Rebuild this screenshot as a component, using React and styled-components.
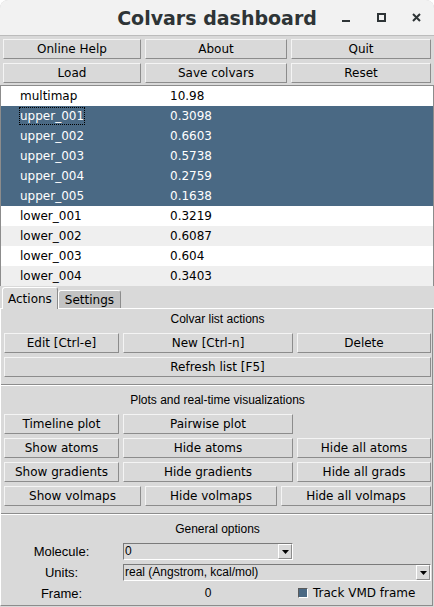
import React from "react";
import styled, { createGlobalStyle } from "styled-components";

const GlobalStyle = createGlobalStyle`
  html, body { margin: 0; padding: 0; background: #ffffff; }
  * { box-sizing: border-box; }
`;

const TK_BG = "#d9d9d9";
const DARK_EDGE = "#8c8c8c";
const SELECT_BG = "#4a6984";

const colvars = [
  { id: "c0", name: "multimap", value: "10.98" },
  { id: "c1", name: "upper_001", value: "0.3098", selected: true, focus: true },
  { id: "c2", name: "upper_002", value: "0.6603", selected: true },
  { id: "c3", name: "upper_003", value: "0.5738", selected: true },
  { id: "c4", name: "upper_004", value: "0.2759", selected: true },
  { id: "c5", name: "upper_005", value: "0.1638", selected: true },
  { id: "c6", name: "lower_001", value: "0.3219" },
  { id: "c7", name: "lower_002", value: "0.6087" },
  { id: "c8", name: "lower_003", value: "0.604" },
  { id: "c9", name: "lower_004", value: "0.3403" },
];

const Window = styled.div`
  width: 434px;
  height: 607px;
  background: ${TK_BG};
  border-radius: 8px 8px 0 0;
  overflow: hidden;
  display: flex;
  flex-direction: column;
`;

const TitleBar = styled.div`
  height: 36px;
  flex: none;
  background: #f2f2f2;
  border-bottom: 1px solid #bcbcbc;
  border-radius: 8px 8px 0 0;
  display: grid;
  grid-template-columns: 1fr auto 1fr;
  align-items: center;
`;

const Title = styled.div`
  grid-column: 2;
  font-family: "DejaVu Sans", sans-serif;
  font-weight: bold;
  font-size: 19px;
  color: #2e3436;
  padding-top: 1px;
`;

const Controls = styled.div`
  grid-column: 3;
  justify-self: end;
  display: flex;
  gap: 3px;
  padding-right: 2px;
`;

const ControlSlot = styled.div`
  width: 32px;
  height: 34px;
  display: flex;
  align-items: center;
  justify-content: center;
  color: #2e3436;
`;

const TopButtons = styled.div`
  display: grid;
  grid-template-columns: 138px 142px 140px;
  grid-auto-rows: 20px;
  gap: 4px;
  padding: 3px 3px 0 3px;
`;

const Button = styled.div`
  height: 20px;
  background: ${TK_BG};
  border-top: 1px solid #f4f4f4;
  border-left: 1px solid #f4f4f4;
  border-right: 1px solid ${DARK_EDGE};
  border-bottom: 1px solid ${DARK_EDGE};
  display: flex;
  align-items: center;
  justify-content: center;
  font-family: "DejaVu Sans", sans-serif;
  font-size: 12px;
  color: #000;
  white-space: nowrap;
  grid-column: ${({ $span }) => ($span ? `span ${$span}` : "auto")};
`;

const List = styled.div`
  margin-top: 2px;
  background: #ffffff;
  border-top: 1px solid ${DARK_EDGE};
  border-left: 1px solid ${DARK_EDGE};
  border-right: 1px solid ${DARK_EDGE};
`;

const Row = styled.div`
  height: 20px;
  display: grid;
  grid-template-columns: 150px 1fr;
  align-items: center;
  padding-left: 19px;
  font-family: "DejaVu Sans", sans-serif;
  font-size: 12px;
  background: ${({ $selected, $odd }) => ($selected ? SELECT_BG : $odd ? "#efefef" : "#ffffff")};
  color: ${({ $selected }) => ($selected ? "#ffffff" : "#000000")};
`;

const Cell = styled.span`
  justify-self: start;
  line-height: 16px;
  outline: ${({ $focus }) => ($focus ? "1px dotted #000" : "none")};
`;

const TabBar = styled.div`
  height: 23px;
  flex: none;
  display: flex;
  align-items: flex-end;
  padding-left: 2px;
  border-bottom: 1px solid #ffffff;
`;

const Tab = styled.div`
  height: ${({ $active }) => ($active ? "22px" : "18px")};
  margin-bottom: ${({ $active }) => ($active ? "-1px" : "0")};
  padding: 0 ${({ $active }) => ($active ? "5px" : "6px")};
  background: ${({ $active }) => ($active ? TK_BG : "#c3c3c3")};
  border-top: 1px solid #ffffff;
  border-left: 1px solid #ffffff;
  border-right: 1px solid ${DARK_EDGE};
  border-radius: 3px 3px 0 0;
  display: flex;
  align-items: center;
  font-family: "DejaVu Sans", sans-serif;
  font-size: 12px;
  color: #000;
  position: relative;
`;

const Pane = styled.div`
  flex: 1;
  margin: 0 1px 1px 0;
  padding: 0 1px 0 3px;
  border-left: 1px solid #ffffff;
  border-right: 1px solid ${DARK_EDGE};
  border-bottom: 1px solid ${DARK_EDGE};
  display: flex;
  flex-direction: column;
`;

const Heading = styled.div`
  height: 20px;
  margin: ${({ $top = 4 }) => $top}px 0 ${({ $bottom = 4 }) => $bottom}px;
  display: flex;
  align-items: center;
  justify-content: center;
  font-family: "Liberation Sans", Arial, sans-serif;
  font-size: 12px;
  color: #000;
`;

const ButtonGrid = styled.div`
  display: grid;
  grid-template-columns: 115px 170px 1fr;
  grid-auto-rows: 20px;
  gap: 4px;
`;

const VolmapRow = styled.div`
  display: grid;
  grid-template-columns: 137px 132px 1fr;
  gap: 4px;
  margin-top: 4px;
`;

const Separator = styled.div`
  margin: 7px -1px 0 -3px;
  height: 2px;
  border-top: 1px solid ${DARK_EDGE};
  border-bottom: 1px solid #ffffff;
`;

const Options = styled.div`
  display: grid;
  grid-template-columns: 115px 170px 1fr;
  grid-auto-rows: 18px;
  column-gap: 4px;
  row-gap: 3px;
  align-items: center;
`;

const OptionLabel = styled.div`
  text-align: center;
  font-family: "Liberation Sans", Arial, sans-serif;
  font-size: 13px;
  color: #000;
`;

const FrameValue = styled(OptionLabel)`
  font-size: 12px;
`;

const Combo = styled.div`
  height: 17px;
  grid-column: ${({ $wide }) => ($wide ? "span 2" : "auto")};
  border-top: 1px solid #7a7a7a;
  border-left: 1px solid #7a7a7a;
  border-right: 1px solid #ffffff;
  border-bottom: 1px solid #ffffff;
  display: flex;
  align-items: center;
  justify-content: space-between;
  padding-left: 1px;
  font-family: "Liberation Sans", Arial, sans-serif;
  font-size: 12px;
  color: #000;
`;

const ComboArrow = styled.div`
  width: 14px;
  height: 15px;
  background: ${TK_BG};
  border-top: 1px solid #ffffff;
  border-left: 1px solid #ffffff;
  border-right: 1px solid ${DARK_EDGE};
  border-bottom: 1px solid ${DARK_EDGE};
  display: flex;
  align-items: center;
  justify-content: center;
  padding-top: 2px;
`;

const Check = styled.label`
  justify-self: start;
  margin-left: 1px;
  display: flex;
  align-items: center;
  gap: 5px;
  font-family: "DejaVu Sans", sans-serif;
  font-size: 12px;
  color: #000;
`;

const CheckBox = styled.span`
  width: 10px;
  height: 10px;
  background: ${SELECT_BG};
  border-top: 1px solid #5a5a5a;
  border-left: 1px solid #5a5a5a;
  border-right: 1px solid #ffffff;
  border-bottom: 1px solid #ffffff;
`;

const Arrow = () => (
  <svg width="7" height="4" viewBox="0 0 7 4">
    <path d="M0 0h7L3.5 4z" fill="#000" />
  </svg>
);

export default function App() {
  return (
    <>
      <GlobalStyle />
      <Window>
        <TitleBar>
          <Title>Colvars dashboard</Title>
          <Controls>
            <ControlSlot>
              <svg width="8" height="10" viewBox="0 0 8 10">
                <rect x="0" y="7" width="8" height="2" fill="currentColor" />
              </svg>
            </ControlSlot>
            <ControlSlot>
              <svg width="9" height="9" viewBox="0 0 9 9">
                <rect x="1" y="1" width="7" height="7" fill="none" stroke="currentColor" strokeWidth="2" />
              </svg>
            </ControlSlot>
            <ControlSlot>
              <svg width="9" height="9" viewBox="0 0 9 9">
                <path d="M1 1l7 7M8 1l-7 7" stroke="currentColor" strokeWidth="2" />
              </svg>
            </ControlSlot>
          </Controls>
        </TitleBar>

        <TopButtons>
          <Button>Online Help</Button>
          <Button>About</Button>
          <Button>Quit</Button>
          <Button>Load</Button>
          <Button>Save colvars</Button>
          <Button>Reset</Button>
        </TopButtons>

        <List>
          {colvars.map((cv, i) => (
            <Row key={cv.id} $selected={cv.selected} $odd={i % 2 === 1}>
              <Cell $focus={cv.focus}>{cv.name}</Cell>
              <Cell>{cv.value}</Cell>
            </Row>
          ))}
        </List>

        <TabBar>
          <Tab $active>Actions</Tab>
          <Tab>Settings</Tab>
        </TabBar>

        <Pane>
          <Heading $top={0}>Colvar list actions</Heading>
          <ButtonGrid>
            <Button>Edit [Ctrl-e]</Button>
            <Button>New [Ctrl-n]</Button>
            <Button>Delete</Button>
            <Button $span={3}>Refresh list [F5]</Button>
          </ButtonGrid>

          <Separator />
          <Heading>Plots and real-time visualizations</Heading>
          <ButtonGrid>
            <Button>Timeline plot</Button>
            <Button>Pairwise plot</Button>
            <span />
            <Button>Show atoms</Button>
            <Button>Hide atoms</Button>
            <Button>Hide all atoms</Button>
            <Button>Show gradients</Button>
            <Button>Hide gradients</Button>
            <Button>Hide all grads</Button>
          </ButtonGrid>
          <VolmapRow>
            <Button>Show volmaps</Button>
            <Button>Hide volmaps</Button>
            <Button>Hide all volmaps</Button>
          </VolmapRow>

          <Separator />
          <Heading $bottom={3}>General options</Heading>
          <Options>
            <OptionLabel>Molecule:</OptionLabel>
            <Combo>
              <span>0</span>
              <ComboArrow><Arrow /></ComboArrow>
            </Combo>
            <span />
            <OptionLabel>Units:</OptionLabel>
            <Combo $wide>
              <span>real (Angstrom, kcal/mol)</span>
              <ComboArrow><Arrow /></ComboArrow>
            </Combo>
            <OptionLabel>Frame:</OptionLabel>
            <FrameValue>0</FrameValue>
            <Check>
              <CheckBox />
              Track VMD frame
            </Check>
          </Options>
        </Pane>
      </Window>
    </>
  );
}
